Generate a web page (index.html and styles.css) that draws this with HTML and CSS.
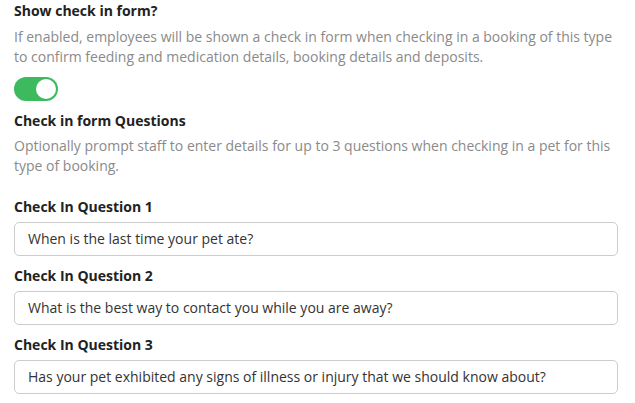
FILE: index.html
```html
<!DOCTYPE html>
<html>
<head>
<meta charset="utf-8">
<link rel="stylesheet" href="styles.css">
</head>
<body>
<div class="page">
  <section class="group">
    <h3 class="title">Show check in form?</h3>
    <p class="desc">If enabled, employees will be shown a check in form when checking in a booking of this type to confirm feeding and medication details, booking details and deposits.</p>
    <div class="toggle on"><span class="knob"></span></div>
  </section>
  <section class="group">
    <h3 class="title tight">Check in form Questions</h3>
    <p class="desc">Optionally prompt staff to enter details for up to 3 questions when checking in a pet for this type of booking.</p>
  </section>
  <div class="fields">
    <div class="field">
      <label class="label">Check In Question 1</label>
      <div class="input">When is the last time your pet ate?</div>
    </div>
    <div class="field">
      <label class="label">Check In Question 2</label>
      <div class="input">What is the best way to contact you while you are away?</div>
    </div>
    <div class="field">
      <label class="label">Check In Question 3</label>
      <div class="input">Has your pet exhibited any signs of illness or injury that we should know about?</div>
    </div>
  </div>
</div>
</body>
</html>
```

FILE: styles.css
```css
html, body {
  margin: 0;
  padding: 0;
  background: #ffffff;
}
body {
  font-family: "Open Sans", "DejaVu Sans", sans-serif;
  font-size: 14px;
  line-height: 20px;
  color: #333333;
}
.page {
  padding: 1px 17px 0 14px;
  width: 604px;
}
.title {
  margin: 0 0 6px 0;
  font-size: 14px;
  line-height: 20px;
  font-weight: 700;
  color: #222222;
}
.title.tight {
  margin-bottom: 5px;
}
.desc {
  margin: 0;
  color: #8a8a8a;
  font-size: 14px;
  line-height: 20px;
}
.toggle {
  margin: 10px 0 10px 0;
  width: 44px;
  height: 24px;
  border-radius: 12px;
  background: #3dba5e;
  box-sizing: border-box;
  padding: 2px;
  display: flex;
  justify-content: flex-end;
}
.knob {
  width: 20px;
  height: 20px;
  border-radius: 50%;
  background: #ffffff;
}
.fields {
  margin-top: 21px;
  display: flex;
  flex-direction: column;
  gap: 10px;
}
.field {
  display: flex;
  flex-direction: column;
  gap: 5px;
}
.label {
  font-weight: 700;
  color: #222222;
  font-size: 14px;
  line-height: 20px;
}
.input {
  box-sizing: border-box;
  height: 34px;
  border: 1px solid #cccccc;
  border-radius: 5px;
  padding: 6px 13px;
  color: #333333;
  font-size: 14px;
  line-height: 20px;
  white-space: nowrap;
  overflow: hidden;
}
```
